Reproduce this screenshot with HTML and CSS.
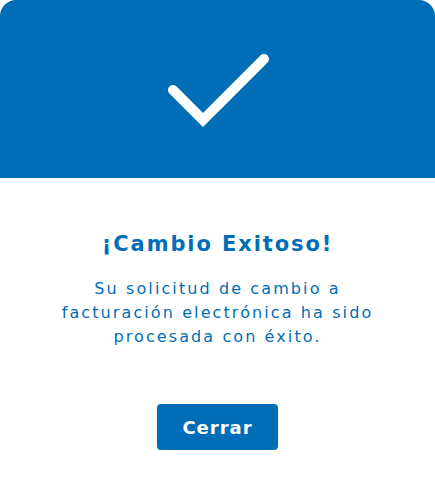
FILE: index.html
```html
<!DOCTYPE html>
<html lang="es">
<head>
<meta charset="utf-8">
<link rel="stylesheet" href="styles.css">
</head>
<body>
<div class="modal">
  <div class="modal-header">
    <svg class="check" width="110" height="90" viewBox="0 0 110 90">
      <polyline points="8,37 38,67 99,6" fill="none" stroke="#fff" stroke-width="10" stroke-linecap="round" stroke-linejoin="miter"/>
    </svg>
  </div>
  <div class="modal-body">
    <h1 class="title">¡Cambio Exitoso!</h1>
    <p class="message">Su solicitud de cambio a<br>facturación electrónica ha sido<br>procesada con éxito.</p>
    <button class="btn">Cerrar</button>
  </div>
</div>
</body>
</html>
```

FILE: styles.css
```css
html, body {
  margin: 0;
  padding: 0;
  background: #fff;
}
.modal {
  width: 435px;
  height: 494px;
  background: #fff;
  font-family: "DejaVu Sans", sans-serif;
}
.modal-header {
  height: 178px;
  background: #006eb6;
  border-radius: 16px 16px 0 0;
  display: flex;
  justify-content: center;
  align-items: flex-start;
}
.check {
  margin-top: 53px;
  margin-left: 5px;
}
.modal-body {
  display: flex;
  flex-direction: column;
  align-items: center;
  padding-top: 52px;
}
.title {
  margin: 0;
  font-size: 21px;
  line-height: 28px;
  font-weight: 700;
  color: #006eb6;
  letter-spacing: 1.9px;
}
.message {
  margin: 19px 0 0;
  font-size: 16px;
  line-height: 24px;
  color: #006eb6;
  text-align: center;
  letter-spacing: 2.1px;
}
.btn {
  margin-top: 55px;
  width: 121px;
  height: 46px;
  border: none;
  border-radius: 4px;
  background: #006eb6;
  color: #fff;
  font-family: "DejaVu Sans", sans-serif;
  font-size: 18px;
  font-weight: 700;
  letter-spacing: 1px;
  padding: 0;
}
```
